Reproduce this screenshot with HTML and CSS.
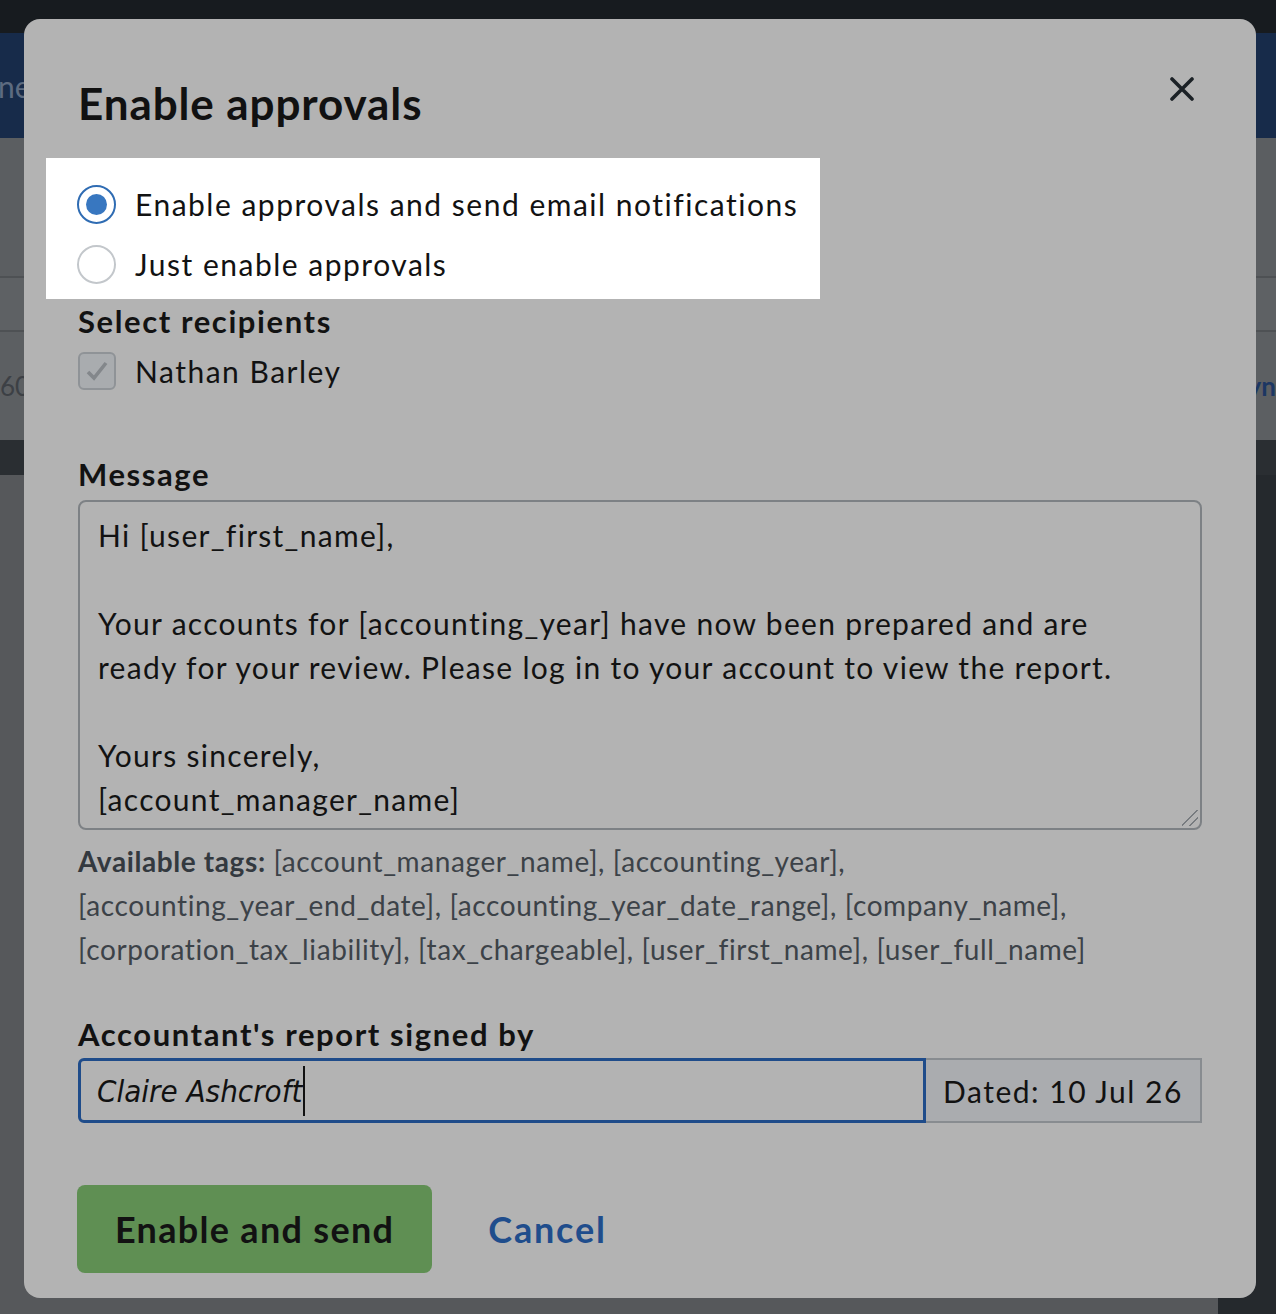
FILE: index.html
```html
<!DOCTYPE html>
<html lang="en">
<head>
  <meta charset="UTF-8" />
  <title>Enable approvals</title>
  <link rel="stylesheet" href="styles.css">
</head>
<body>

<div class="page">
  <div class="topbar"></div>
  <div class="navbar"><span class="nav-link">ne</span></div>
  <div class="subheader"></div>
  <div class="tabs"></div>
  <div class="summary">
    <span class="summary-num">60</span>
    <span class="summary-link">yn</span>
  </div>
  <div class="content">
    <div class="content-band"></div>
    <div class="content-body">
      <div class="content-main"></div>
      <div class="content-side"></div>
    </div>
  </div>
</div>

<div class="modal">
  <button class="close" aria-label="Close">
    <svg width="24" height="24" viewBox="0 0 24 24">
      <path d="M2 2 L22 22 M22 2 L2 22" stroke="#1b2126" stroke-width="3.6" stroke-linecap="round" fill="none"/>
    </svg>
  </button>

  <h2 class="modal-title">Enable approvals</h2>

  <div class="spotlight">
    <label class="radio-row">
      <span class="radio radio-on"></span>
      Enable approvals and send email notifications
    </label>
    <label class="radio-row">
      <span class="radio"></span>
      Just enable approvals
    </label>
  </div>

  <div class="field-label">Select recipients</div>
  <label class="check-row">
    <span class="checkbox">
      <svg width="28" height="28" viewBox="0 0 28 28">
        <path d="M5 15 L11 21 L23 6" stroke="#83878b" stroke-width="3.6" fill="none"/>
      </svg>
    </span>
    Nathan Barley
  </label>

  <div class="field-label message-label">Message</div>
  <div class="textarea">Hi [user_first_name],

Your accounts for [accounting_year] have now been prepared and are
ready for your review. Please log in to your account to view the report.

Yours sincerely,
[account_manager_name]<span class="grip"></span></div>

  <p class="tags"><b>Available tags:</b> [account_manager_name], [accounting_year],<br>[accounting_year_end_date], [accounting_year_date_range], [company_name],<br>[corporation_tax_liability], [tax_chargeable], [user_first_name], [user_full_name]</p>

  <div class="field-label signed-label">Accountant's report signed by</div>
  <div class="input-group">
    <div class="sig-input">Claire Ashcroft<span class="caret"></span></div>
    <div class="addon">Dated: 10 Jul 26</div>
  </div>

  <div class="actions">
    <button class="btn-primary">Enable and send</button>
    <a class="cancel" href="#">Cancel</a>
  </div>
</div>

</body>
</html>
```

FILE: styles.css
```css
* {
  box-sizing: border-box;
}

html, body {
  margin: 0;
  height: 100%;
}

body {
  font-family: Lato, "Open Sans", sans-serif;
  background-color: #55585b;
  overflow: hidden;
}

/* dimmed page behind the dialog */
.page {
  height: 100%;
  display: flex;
  flex-direction: column;
}

.topbar {
  height: 33px;
  background-color: #171b1f;
}

.navbar {
  height: 105px;
  background-color: #172b4a;
  display: flex;
  align-items: center;
}

.nav-link {
  color: #5d6b80;
  font-size: 30px;
  margin-left: -2px;
}

.subheader {
  height: 140px;
  background-color: #5b5e61;
  border-bottom: 2px solid #4e5154;
}

.tabs {
  height: 54px;
  background-color: #5e6164;
  border-bottom: 2px solid #4e5154;
}

.summary {
  height: 108px;
  background-color: #5c5f62;
  display: flex;
  align-items: center;
  justify-content: space-between;
  font-size: 26px;
}

.summary-num {
  color: #3c4045;
}

.summary-link {
  color: #1c3763;
  font-weight: bold;
}

.content {
  flex: 1;
  display: flex;
  flex-direction: column;
}

.content-band {
  height: 35px;
  background-color: #2a2e32;
}

.content-body {
  flex: 1;
  display: flex;
}

.content-main {
  flex: 1;
  background-color: #56585b;
}

.content-side {
  width: 58px;
  background-color: #25292d;
}

/* dialog */
.modal {
  position: absolute;
  top: 19px;
  left: 24px;
  width: 1232px;
  height: 1279px;
  background-color: #b3b3b3;
  border-radius: 16px;
  padding: 59px 54px 25px;
  color: #121212;
}

.close {
  position: absolute;
  top: 58px;
  right: 62px;
  border: none;
  background: none;
  padding: 0;
  line-height: 0;
}

.modal-title {
  font-size: 44px;
  line-height: 50px;
  letter-spacing: 0.9px;
  font-weight: bold;
  margin: 0 0 30px;
  color: #111;
}

.spotlight {
  background-color: #fff;
  width: fit-content;
  margin-left: -32px;
  padding: 24px 22px 13px 31px;
  display: flex;
  flex-direction: column;
  gap: 16px;
}

.radio-row,
.check-row {
  display: flex;
  align-items: center;
  height: 44px;
  font-size: 30px;
  letter-spacing: 1.5px;
  gap: 19px;
  color: #121212;
}

.radio {
  width: 39px;
  height: 39px;
  border-radius: 50%;
  border: 2px solid #c3c7cb;
  background-color: #fff;
  flex-shrink: 0;
  display: flex;
  align-items: center;
  justify-content: center;
}

.radio-on {
  border-color: #2f6cb3;
}

.radio-on::after {
  content: "";
  width: 21px;
  height: 21px;
  border-radius: 50%;
  background-color: #3877c0;
}

.field-label {
  font-size: 31px;
  line-height: 36px;
  letter-spacing: 1.6px;
  font-weight: bold;
  margin-top: 4px;
}

.check-row {
  margin-top: 10px;
}

.checkbox {
  width: 38px;
  height: 38px;
  border-radius: 6px;
  border: 2px solid #8f9397;
  background-color: #a9acaf;
  flex-shrink: 0;
  display: flex;
  align-items: center;
  justify-content: center;
}

.message-label {
  margin-top: 63px;
}

.textarea {
  position: relative;
  margin-top: 8px;
  height: 330px;
  border: 2px solid #7d8185;
  border-radius: 8px;
  padding: 11px 18px;
  font-size: 30px;
  line-height: 44px;
  letter-spacing: 1.3px;
  white-space: pre-wrap;
  color: #121212;
}

.grip {
  position: absolute;
  right: 2px;
  bottom: 2px;
  width: 16px;
  height: 16px;
  background: linear-gradient(135deg, transparent 45%, #777b7f 45%, #777b7f 53%, transparent 53%, transparent 70%, #777b7f 70%, #777b7f 78%, transparent 78%);
}

.tags {
  margin: 9px 0 0;
  font-size: 28px;
  line-height: 44px;
  letter-spacing: 0.6px;
  color: #3c4248;
}

.tags b {
  color: #33393f;
}

.signed-label {
  margin-top: 45px;
}

.input-group {
  display: flex;
  margin-top: 6px;
  height: 65px;
}

.sig-input {
  flex: 1;
  border: 3px solid #1f4c8a;
  border-radius: 6px 0 0 6px;
  display: flex;
  align-items: center;
  padding-left: 16px;
  font-family: "DejaVu Sans Condensed", "DejaVu Sans", sans-serif;
  font-style: oblique;
  font-size: 31px;
  color: #111;
}

.caret {
  width: 2px;
  height: 50px;
  background-color: #111;
  margin-left: 1px;
}

.addon {
  width: 276px;
  border: 2px solid #888c90;
  border-left: none;
  background-color: #aaacaf;
  display: flex;
  align-items: center;
  justify-content: center;
  font-size: 30px;
  letter-spacing: 1.5px;
  color: #121212;
}

.actions {
  display: flex;
  align-items: center;
  gap: 56px;
  margin-top: 62px;
}

.btn-primary {
  height: 88px;
  padding: 0 38px;
  border: none;
  border-radius: 8px;
  background-color: #5f8f53;
  font-family: Lato, sans-serif;
  font-size: 36px;
  letter-spacing: 1.3px;
  font-weight: bold;
  color: #121212;
  margin-left: -1px;
}

.cancel {
  font-size: 36px;
  letter-spacing: 1.8px;
  font-weight: bold;
  color: #1f4d8c;
  text-decoration: none;
}
```
